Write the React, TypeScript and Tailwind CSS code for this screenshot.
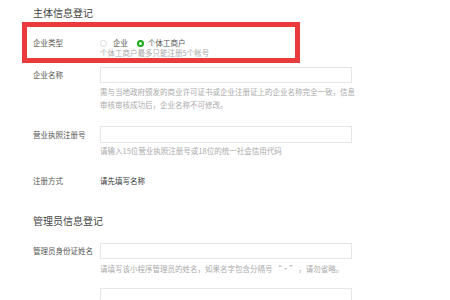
import React from "react";

const font = { fontFamily: '"Noto Sans CJK SC", "Noto Sans", sans-serif' };

function Input() {
  return <div className="w-[252px] h-[16px] border border-[#e6e6e6] bg-white" />;
}

export default function App() {
  return (
    <div
      className="w-[450px] h-[300px] bg-white overflow-hidden flex flex-col"
      style={font}
    >
      <div className="mt-[6px] ml-[33px] text-[10px] leading-[14px] text-[#444]">主体信息登记</div>

      <div className="mt-[2px] ml-[22px] w-[278px] h-[50px] border-[5px] border-[#ea3a3c] flex pl-[6px] pt-[11px]">
        <div className="w-[67px] text-[7.5px] leading-[10px] text-[#555]">企业类型</div>
        <div className="flex flex-col">
          <div className="flex items-center h-[10px] text-[7.5px] leading-[10px] text-[#555]">
            <span className="w-[7px] h-[7px] rounded-full border border-[#d9d9d9]" />
            <span className="ml-[6px]">企业</span>
            <span className="ml-[9px] w-[7px] h-[7px] rounded-full border-[2px] border-[#1aad19]" />
            <span className="ml-[4px]">个体工商户</span>
          </div>
          <div className="text-[7.5px] leading-[10px] text-[#aaa]">个体工商户最多只能注册5个帐号</div>
        </div>
      </div>

      <div className="mt-[4px] ml-[33px] flex">
        <div className="w-[67px] h-[16px] flex items-center text-[7.5px] text-[#555]">企业名称</div>
        <div className="flex flex-col">
          <Input />
          <div className="mt-[2px] text-[7.5px] leading-[13px] text-[#aaa] whitespace-nowrap">
            需与当地政府颁发的商业许可证书或企业注册证上的企业名称完全一致，信息
            <br />
            审核审核成功后，企业名称不可修改。
          </div>
        </div>
      </div>

      <div className="mt-[15px] ml-[33px] flex">
        <div className="w-[67px] h-[17px] flex items-center text-[7.5px] text-[#555]">营业执照注册号</div>
        <div className="flex flex-col">
          <div className="w-[252px] h-[17px] border border-[#e6e6e6] bg-white" />
          <div className="mt-[1px] text-[7.5px] leading-[13px] text-[#aaa] whitespace-nowrap">
            请输入15位营业执照注册号或18位的统一社会信用代码
          </div>
        </div>
      </div>

      <div className="mt-[18px] ml-[33px] flex text-[7.5px] leading-[12px]">
        <div className="w-[67px] text-[#555]">注册方式</div>
        <div className="text-[#333]">请先填写名称</div>
      </div>

      <div className="mt-[27px] ml-[33px] text-[10px] leading-[14px] text-[#444]">管理员信息登记</div>

      <div className="mt-[15px] ml-[33px] flex">
        <div className="w-[67px] h-[16px] flex items-center text-[7.5px] text-[#555] whitespace-nowrap">管理员身份证姓名</div>
        <div className="flex flex-col">
          <Input />
          <div className="mt-[3px] text-[7.5px] leading-[13px] text-[#aaa] whitespace-nowrap">
            请填写该小程序管理员的姓名，如果名字包含分隔号 “·” ，请勿省略。
          </div>
          <div className="mt-[13px]">
            <Input />
          </div>
        </div>
      </div>
    </div>
  );
}
